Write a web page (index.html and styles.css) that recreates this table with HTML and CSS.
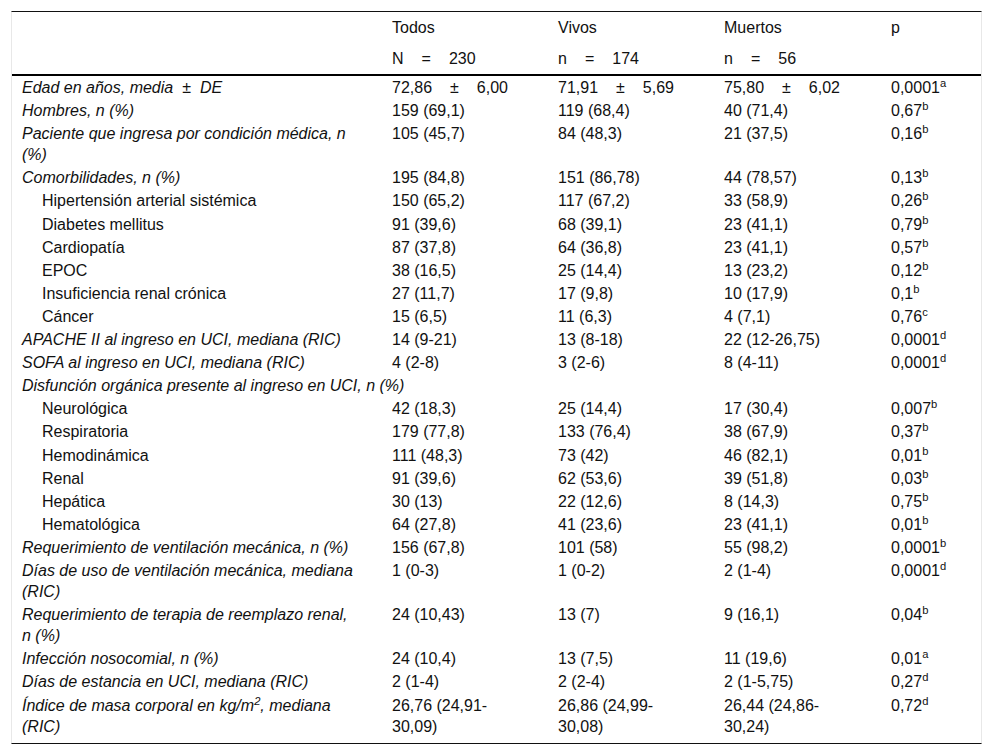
FILE: index.html
```html
<!DOCTYPE html>
<html lang="es">
<head>
<meta charset="utf-8">
<title>Tabla</title>
<link rel="stylesheet" href="styles.css">
</head>
<body>
<div class="frame">
<table class="data">
  <colgroup>
    <col class="c-label">
    <col class="c-num">
    <col class="c-num">
    <col class="c-num3">
    <col class="c-p">
  </colgroup>
  <thead>
    <tr>
      <th></th>
      <th>Todos</th>
      <th>Vivos</th>
      <th>Muertos</th>
      <th>p</th>
    </tr>
    <tr class="sub">
      <th></th>
      <th>N<span class="eq">=</span>230</th>
      <th>n<span class="eq">=</span>174</th>
      <th>n<span class="eq">=</span>56</th>
      <th></th>
    </tr>
  </thead>
  <tbody>
    <tr><td class="lbl">Edad en años, media<span class="eq-s">±</span>DE</td><td>72,86<span class="eq">±</span>6,00</td><td>71,91<span class="eq">±</span>5,69</td><td>75,80<span class="eq">±</span>6,02</td><td>0,0001<sup>a</sup></td></tr>
    <tr><td class="lbl">Hombres, n (%)</td><td>159 (69,1)</td><td>119 (68,4)</td><td>40 (71,4)</td><td>0,67<sup>b</sup></td></tr>
    <tr><td class="lbl">Paciente que ingresa por condición médica, n<br>(%)</td><td>105 (45,7)</td><td>84 (48,3)</td><td>21 (37,5)</td><td>0,16<sup>b</sup></td></tr>
    <tr><td class="lbl">Comorbilidades, n (%)</td><td>195 (84,8)</td><td>151 (86,78)</td><td>44 (78,57)</td><td>0,13<sup>b</sup></td></tr>
    <tr><td class="ind">Hipertensión arterial sistémica</td><td>150 (65,2)</td><td>117 (67,2)</td><td>33 (58,9)</td><td>0,26<sup>b</sup></td></tr>
    <tr><td class="ind">Diabetes mellitus</td><td>91 (39,6)</td><td>68 (39,1)</td><td>23 (41,1)</td><td>0,79<sup>b</sup></td></tr>
    <tr><td class="ind">Cardiopatía</td><td>87 (37,8)</td><td>64 (36,8)</td><td>23 (41,1)</td><td>0,57<sup>b</sup></td></tr>
    <tr><td class="ind">EPOC</td><td>38 (16,5)</td><td>25 (14,4)</td><td>13 (23,2)</td><td>0,12<sup>b</sup></td></tr>
    <tr><td class="ind">Insuficiencia renal crónica</td><td>27 (11,7)</td><td>17 (9,8)</td><td>10 (17,9)</td><td>0,1<sup>b</sup></td></tr>
    <tr><td class="ind">Cáncer</td><td>15 (6,5)</td><td>11 (6,3)</td><td>4 (7,1)</td><td>0,76<sup>c</sup></td></tr>
    <tr><td class="lbl">APACHE II al ingreso en UCI, mediana (RIC)</td><td>14 (9-21)</td><td>13 (8-18)</td><td>22 (12-26,75)</td><td>0,0001<sup>d</sup></td></tr>
    <tr><td class="lbl">SOFA al ingreso en UCI, mediana (RIC)</td><td>4 (2-8)</td><td>3 (2-6)</td><td>8 (4-11)</td><td>0,0001<sup>d</sup></td></tr>
    <tr><td class="lbl" colspan="5">Disfunción orgánica presente al ingreso en UCI, n (%)</td></tr>
    <tr><td class="ind">Neurológica</td><td>42 (18,3)</td><td>25 (14,4)</td><td>17 (30,4)</td><td>0,007<sup>b</sup></td></tr>
    <tr><td class="ind">Respiratoria</td><td>179 (77,8)</td><td>133 (76,4)</td><td>38 (67,9)</td><td>0,37<sup>b</sup></td></tr>
    <tr><td class="ind">Hemodinámica</td><td>111 (48,3)</td><td>73 (42)</td><td>46 (82,1)</td><td>0,01<sup>b</sup></td></tr>
    <tr><td class="ind">Renal</td><td>91 (39,6)</td><td>62 (53,6)</td><td>39 (51,8)</td><td>0,03<sup>b</sup></td></tr>
    <tr><td class="ind">Hepática</td><td>30 (13)</td><td>22 (12,6)</td><td>8 (14,3)</td><td>0,75<sup>b</sup></td></tr>
    <tr><td class="ind">Hematológica</td><td>64 (27,8)</td><td>41 (23,6)</td><td>23 (41,1)</td><td>0,01<sup>b</sup></td></tr>
    <tr><td class="lbl">Requerimiento de ventilación mecánica, n (%)</td><td>156 (67,8)</td><td>101 (58)</td><td>55 (98,2)</td><td>0,0001<sup>b</sup></td></tr>
    <tr><td class="lbl">Días de uso de ventilación mecánica, mediana<br>(RIC)</td><td>1 (0-3)</td><td>1 (0-2)</td><td>2 (1-4)</td><td>0,0001<sup>d</sup></td></tr>
    <tr><td class="lbl">Requerimiento de terapia de reemplazo renal,<br>n (%)</td><td>24 (10,43)</td><td>13 (7)</td><td>9 (16,1)</td><td>0,04<sup>b</sup></td></tr>
    <tr><td class="lbl">Infección nosocomial, n (%)</td><td>24 (10,4)</td><td>13 (7,5)</td><td>11 (19,6)</td><td>0,01<sup>a</sup></td></tr>
    <tr><td class="lbl">Días de estancia en UCI, mediana (RIC)</td><td>2 (1-4)</td><td>2 (2-4)</td><td>2 (1-5,75)</td><td>0,27<sup>d</sup></td></tr>
    <tr><td class="lbl">Índice de masa corporal en kg/m<sup>2</sup>, mediana<br>(RIC)</td><td>26,76 (24,91-<br>30,09)</td><td>26,86 (24,99-<br>30,08)</td><td>26,44 (24,86-<br>30,24)</td><td>0,72<sup>d</sup></td></tr>
  </tbody>
</table>
</div>
</body>
</html>
```

FILE: styles.css
```css
html, body {
  margin: 0;
  padding: 0;
  background: #fff;
}

body {
  font-family: "Liberation Sans", Arial, sans-serif;
  font-size: 16px;
  color: #111;
}

.frame {
  width: 969px;
  margin: 11px 0 0 11px;
  padding-bottom: 5px;
  border-top: 1px solid #111;
  border-bottom: 1px solid #111;
  border-left: 1px solid #e8e8e8;
  border-right: 1px solid #e8e8e8;
}

.data {
  width: 969px;
  table-layout: fixed;
  border-collapse: separate;
  border-spacing: 0;
}

.c-label { width: 369px; }
.c-num { width: 166px; }
.c-num3 { width: 167px; }
.c-p { width: 101px; }

.data th {
  font-weight: normal;
  text-align: left;
  line-height: 23px;
  padding: 4px 0 4px 11px;
  white-space: nowrap;
}

.data .sub th {
  border-bottom: 2px solid #000;
}

.data td {
  line-height: 21.1px;
  padding: 1px 0 1px 11px;
  vertical-align: top;
  text-align: left;
  white-space: nowrap;
}

.data td.lbl {
  font-style: italic;
  padding-left: 10px;
}

.data td.ind {
  padding-left: 30px;
}

.eq {
  margin: 0 18px;
}

.eq-s {
  margin: 0 9px;
}

sup {
  font-size: 0.7em;
  line-height: 0;
  vertical-align: 0.5em;
}
```
